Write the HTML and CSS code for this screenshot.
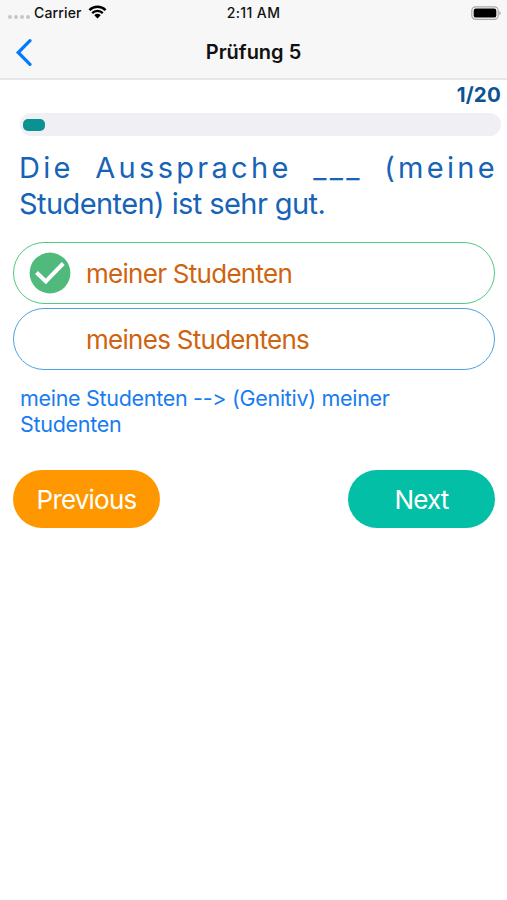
FILE: index.html
```html
<!DOCTYPE html>
<html lang="de">
<head>
<meta charset="utf-8">
<title>Prüfung 5</title>
<link rel="stylesheet" href="styles.css">
</head>
<body>
<header class="header">
  <div class="status">
    <div class="carrier">
      <span class="dots"><i></i><i></i><i></i><i></i></span>
      <span class="carrier-name">Carrier</span>
      <svg class="wifi" width="19" height="14" viewBox="0 0 19 14">
        <path d="M1.4 5.1a11.6 11.6 0 0 1 16.2 0M4.2 8.1a7.5 7.5 0 0 1 10.6 0" fill="none" stroke="#000" stroke-width="2.4"/>
        <path d="M6.3 10.2a4.5 4.5 0 0 1 6.4 0L9.5 13.5z"/>
      </svg>
    </div>
    <span class="time">2:11 AM</span>
    <svg class="battery" width="31" height="14" viewBox="0 0 31 14">
      <rect x=".8" y=".8" width="26.4" height="12.6" rx="3.8" fill="none" stroke="#a8a8a8" stroke-width="1.2"/>
      <rect x="2.7" y="2.6" width="22.6" height="9" rx="2.2"/>
      <path d="M28.4 5c1.8.7 1.8 3.5 0 4.2z" fill="#a8a8a8"/>
    </svg>
  </div>
  <nav class="nav">
    <svg class="back" width="18" height="28" viewBox="0 0 18 28"><path d="M15 2.7 3.2 14.500 15 26.300" fill="none" stroke="#007aff" stroke-width="3.2" stroke-linecap="round" stroke-linejoin="miter"/></svg>
    <h1 class="title">Prüfung 5</h1>
    <span></span>
  </nav>
</header>
<main class="quiz">
  <div class="count">1/20</div>
  <div class="track"><div class="fill"></div></div>
  <div class="question">
    <div class="line spread"><span>Die</span> <span>Aussprache</span> <span class="blank">___</span> <span>(meine</span></div>
    <div class="line tight">Studenten) ist sehr gut.</div>
  </div>
  <div class="options">
    <div class="option correct">
      <svg class="check" width="42" height="42" viewBox="0 0 42 42"><circle cx="21" cy="21" r="20.400" fill="#50ba7d"/><path d="m7.500 20.500 9.300 9L34.200 11.500" fill="none" stroke="#fff" stroke-width="4"/></svg>
      <span class="answer">meiner Studenten</span>
    </div>
    <div class="option"><span class="answer">meines Studentens</span></div>
  </div>
  <p class="explain">meine Studenten --&gt; (Genitiv) meiner<br>Studenten</p>
  <div class="actions">
    <button class="button previous">Previous</button>
    <button class="button next">Next</button>
  </div>
</main>
</body>
</html>
```
FILE: styles.css
```css
* { box-sizing: border-box; }
body { margin: 0; background: #fff; font-family: Inter, "Liberation Sans", sans-serif; font-feature-settings: "calt" 0; }
svg { display: block; flex: none; }
.header { height: 80px; background: #f7f7f7; border-bottom: 2px solid #e6e6e6; }
.status { height: 26px; display: grid; grid-template-columns: 1fr auto 1fr; align-items: center; padding: 0 5px 0 8px; font-size: 14px; font-weight: 500; color: #111; }
.carrier { display: flex; align-items: center; height: 24px; align-self: start; }
.carrier-name { margin-left: -1px; letter-spacing: .15px; }
.time { height: 26px; line-height: 25px; margin-right: 3px; letter-spacing: .4px; }
.dots { display: flex; gap: 2px; padding-top: 9px; margin-right: 5px; }
.dots i { width: 4px; height: 4px; border-radius: 50%; background: #c6c6c6; }
.wifi { margin-left: 6px; }
.battery { justify-self: end; }
.nav { height: 52px; display: grid; grid-template-columns: 1fr auto 1fr; align-items: center; padding: 0 15px; }
.title { margin: 0; font-size: 20px; font-weight: 600; letter-spacing: 0; color: #111; }
.quiz { display: flex; flex-direction: column; }
.count { height: 33px; padding-right: 6px; text-align: right; line-height: 30px; font-size: 20.500px; font-weight: 700; letter-spacing: .2px; color: #0b5394; }
.track { height: 23px; margin: 0 6px 0 20px; padding: 6px 3px; border-radius: 12px; background: #efeff4; }
.fill { width: 22px; height: 12px; border-radius: 5px; background: #0a9293; }
.question { margin: 13px 9px 0 19px; font-size: 29px; color: #1763b6; }
.line { height: 37px; line-height: 37px; white-space: nowrap; }
.spread { display: flex; justify-content: space-between; letter-spacing: 3.3px; }
.blank { letter-spacing: 3.3px; }
.tight { line-height: 35px; letter-spacing: -.58px; }
.options { margin: 19px 12px 0 13px; display: flex; flex-direction: column; gap: 4px; }
.option { height: 62px; display: flex; align-items: center; padding-left: 72px; border: 1.500px solid #4ecb7d; border-radius: 31px; font-size: 26px; letter-spacing: -.72px; color: #cf640f; }
.option:not(.correct) { border-color: #4ba3e3; }
.correct { padding-left: 15px; }
.check { margin-right: 15px; }
.explain { margin: 15px 12px 0 20px; font-size: 21.500px; line-height: 26px; letter-spacing: -.3px; color: #187cf0; white-space: nowrap; }
.actions { margin: 33px 12px 0 13px; display: flex; justify-content: space-between; }
.button { width: 147px; height: 58px; padding: 0; border: 0; border-radius: 29px; color: #fff; font: 400 26px Inter, sans-serif; letter-spacing: -.8px; }
.previous { background: #ff9800; }
.next { background: #03bfa5; }
```
